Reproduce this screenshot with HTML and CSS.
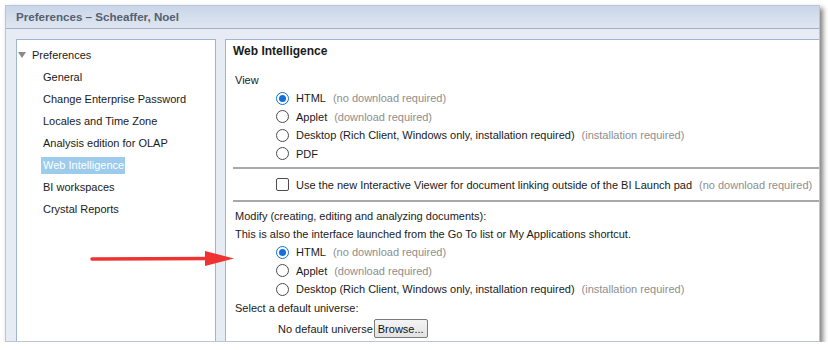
FILE: index.html
```html
<!DOCTYPE html>
<html lang="en">
<head>
    <meta charset="UTF-8">
    <title>Preferences</title>
    <link rel="stylesheet" href="styles.css">
</head>
<body>
    <div class="window">
        <div class="titlebar">Preferences – Scheaffer, Noel</div>
        <div class="main">
            <div class="tree">
                <div class="tree-root"><span class="caret"></span>Preferences</div>
                <div class="tree-item">General</div>
                <div class="tree-item">Change Enterprise Password</div>
                <div class="tree-item">Locales and Time Zone</div>
                <div class="tree-item">Analysis edition for OLAP</div>
                <div class="tree-item"><span class="selected">Web Intelligence</span></div>
                <div class="tree-item">BI workspaces</div>
                <div class="tree-item">Crystal Reports</div>
            </div>
            <div class="content">
                <div class="heading">Web Intelligence</div>

                <div class="label view-label">View</div>
                <div class="options">
                    <div class="option"><span class="radio checked"></span>HTML<span class="hint">(no download required)</span></div>
                    <div class="option"><span class="radio"></span>Applet <span class="hint">(download required)</span></div>
                    <div class="option"><span class="radio"></span>Desktop (Rich Client, Windows only, installation required)<span class="hint">(installation required)</span></div>
                    <div class="option"><span class="radio"></span>PDF</div>
                </div>

                <div class="linkbox">
                    <div class="option"><span class="checkbox"></span>Use the new Interactive Viewer for document linking outside of the BI Launch pad<span class="hint">(no download required)</span></div>
                </div>

                <div class="label">Modify (creating, editing and analyzing documents):</div>
                <div class="label">This is also the interface launched from the Go To list or My Applications shortcut.</div>
                <div class="options">
                    <div class="option"><span class="radio checked"></span>HTML<span class="hint">(no download required)</span></div>
                    <div class="option"><span class="radio"></span>Applet<span class="hint">(download required)</span></div>
                    <div class="option"><span class="radio"></span>Desktop (Rich Client, Windows only, installation required)<span class="hint">(installation required)</span></div>
                </div>
                <div class="label">Select a default universe:</div>
                <div class="universe">No default universe<button class="browse">Browse...</button></div>
            </div>
        </div>
        <!-- annotation arrow drawn over the screenshot -->
        <svg class="arrow" width="150" height="20" viewBox="0 0 150 20">
            <path d="M4 10 L122 9.5" stroke="#ee3333" stroke-width="3.5" stroke-linecap="round"/>
            <polygon points="117,2 146,9.5 117,17" fill="#ee3333"/>
        </svg>
    </div>
</body>
</html>
```

FILE: styles.css
```css
body {
    margin: 0;
    padding: 5px 0 0 5px;
    background: #ffffff;
    font-family: "Liberation Sans", Arial, sans-serif;
    font-size: 11px;
    color: #1a1a1a;
}
.window {
    position: relative;
    width: 813px;
    height: 335px;
    background: #e6ebf4;
    border: 1px solid #b8c5da;
    box-shadow: 3px 3px 5px rgba(0,0,0,0.5);
    display: flex;
    flex-direction: column;
}
.titlebar {
    height: 22px;
    line-height: 22px;
    padding-left: 10px;
    font-size: 11.6px;
    font-weight: bold;
    color: #55606f;
    background: linear-gradient(#c9d6e9, #dfe6f1);
    border-bottom: 1px solid #9db0ce;
}
.main {
    flex: 1;
    display: flex;
    gap: 9px;
    padding: 10px 0 0 10px;
    min-height: 0;
}
.tree {
    width: 198px;
    background: #ffffff;
    border: 1px solid #a3b4d1;
    border-bottom: none;
    padding-top: 4px;
}
.tree-root, .tree-item {
    height: 22px;
    line-height: 22px;
    white-space: nowrap;
}
.tree-root {
    display: flex;
    align-items: center;
    padding-left: 1px;
}
.caret {
    width: 0;
    height: 0;
    border-left: 4px solid transparent;
    border-right: 4px solid transparent;
    border-top: 6px solid #8a8a8a;
    margin: 0 6px 0 0;
}
.tree-item {
    padding-left: 26px;
}
.selected {
    display: inline-block;
    background: #9ccbec;
    color: #ffffff;
    line-height: 17px;
    padding: 0 1px 0 2px;
    margin-left: -2px;
}
.content {
    flex: 1;
    background: #ffffff;
    border: 1px solid #a3b4d1;
    border-right: none;
    border-bottom: none;
    padding: 3px 0 0 7px;
    white-space: nowrap;
}
.heading {
    font-size: 12px;
    font-weight: bold;
    line-height: 16px;
}
.label {
    line-height: 18px;
    padding-left: 2px;
}
.view-label {
    margin-top: 12px;
}
.options {
    padding-left: 43px;
}
.option {
    display: flex;
    align-items: center;
    height: 18.5px;
}
.radio {
    width: 11px;
    height: 11px;
    border: 1px solid #4c4c4c;
    border-radius: 50%;
    margin-right: 7px;
    box-sizing: content-box;
    position: relative;
}
.radio.checked {
    border-color: #1070d8;
}
.radio.checked::after {
    content: "";
    position: absolute;
    left: 2px;
    top: 2px;
    width: 7px;
    height: 7px;
    border-radius: 50%;
    background: #1070d8;
}
.checkbox {
    width: 11px;
    height: 11px;
    border: 1px solid #4c4c4c;
    border-radius: 2px;
    margin-right: 7px;
}
.hint {
    color: #8e8e8e;
    margin-left: 7px;
}
.linkbox {
    margin: 4px 0 5px 0;
    border-top: 2px solid #a9a9a9;
    border-bottom: 2px solid #a9a9a9;
    padding: 7px 0 7px 43px;
    height: 35px;
    box-sizing: border-box;
    display: flex;
    align-items: center;
}
.universe {
    display: flex;
    align-items: center;
    padding-left: 45px;
    margin-top: 2px;
    height: 20px;
}
.browse {
    font-family: "Liberation Sans", Arial, sans-serif;
    font-size: 11px;
    height: 19px;
    padding: 0 3px;
    margin-left: 1px;
    border: 1px solid #7a7a7a;
    border-radius: 2px;
    background: linear-gradient(#f4f4f4, #e2e2e2);
    color: #111;
}
.arrow {
    position: absolute;
    left: 82px;
    top: 243px;
}
```
